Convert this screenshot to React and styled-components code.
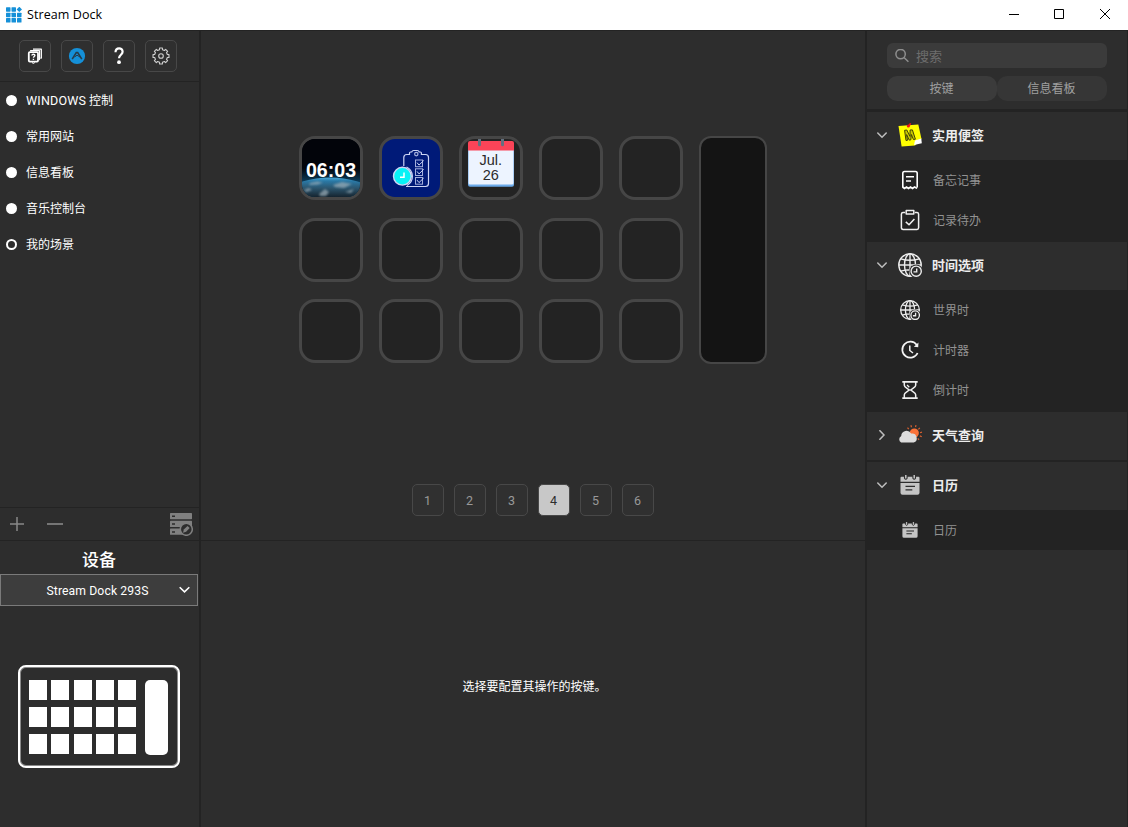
import React from "react";
import styled, { createGlobalStyle, css } from "styled-components";

const GlobalStyle = createGlobalStyle`
  * { box-sizing: border-box; }
  body {
    margin: 0;
    background: #2d2d2d;
    color: #fff;
    font: 12px/16px "Open Sans", "Noto Sans CJK SC", sans-serif;
    overflow: hidden;
  }
  svg { display: block; flex: none; }
  button { font: inherit; color: inherit; padding: 0; margin: 0; }
`;

const LINE = "#232323";
const UI_FONT = `Roboto, "Noto Sans CJK SC", sans-serif`;

const Window = styled.div`
  width: 1128px;
  height: 827px;
  display: flex;
  flex-direction: column;
`;

const TitleBar = styled.header`
  height: 30px;
  flex: none;
  display: flex;
  align-items: center;
  padding-left: 6px;
  background: #fff;
  color: #000;
`;

const AppName = styled.span`
  flex: 1;
  margin-left: 5px;
  font-size: 12.5px;
  letter-spacing: 0.08px;
`;

const CaptionButton = styled.button`
  width: ${(p) => p.$w || 46}px;
  height: 30px;
  border: 0;
  background: none;
  display: flex;
  align-items: center;
  justify-content: center;
  padding-bottom: 2px;
`;

const Body = styled.div`
  flex: 1;
  min-height: 0;
  display: flex;
  border-top: 1px solid ${LINE};
`;

const Sidebar = styled.aside`
  width: 201px;
  flex: none;
  display: flex;
  flex-direction: column;
  border-right: 2px solid ${LINE};
`;

const Toolbar = styled.div`
  height: 51px;
  flex: none;
  display: flex;
  gap: 10px;
  padding: 9px 0 0 19px;
  border-bottom: 1px solid ${LINE};
`;

const ToolButton = styled.button`
  width: 32px;
  height: 32px;
  border: 1px solid #484848;
  border-radius: 5px;
  background: #2f2f2f;
  display: flex;
  align-items: center;
  justify-content: center;
`;

const SceneList = styled.ul`
  flex: 1;
  list-style: none;
  margin: 0;
  padding: 0;
`;

const Scene = styled.li`
  height: 36px;
  display: flex;
  align-items: center;
  gap: 9px;
  padding-left: 6px;
  white-space: pre;
  font-family: ${UI_FONT};
`;

const SceneName = styled.span`
  padding-top: 1px;
  font-size: 12px;
`;

const Latin = styled.span`
  font-size: 12.5px;
  letter-spacing: 0.2px;
`;

const Dot = styled.span`
  width: 11px;
  height: 11px;
  border-radius: 50%;
  background: ${(p) => (p.$hollow ? "transparent" : "#fff")};
  border: 2px solid #fff;
`;

const SceneActions = styled.div`
  height: 34px;
  flex: none;
  display: flex;
  align-items: center;
  padding: 0 6px 0 9px;
  border-top: 1px solid ${LINE};
  border-bottom: 1px solid ${LINE};
`;

const ActionGap = styled.span`
  width: ${(p) => p.$w}px;
`;

const DevicePane = styled.section`
  height: 286px;
  flex: none;
`;

const DeviceTitle = styled.h2`
  margin: 0;
  height: 33px;
  text-align: center;
  font-size: 17px;
  line-height: 38px;
  font-weight: 500;
  padding-right: 1px;
`;

const DeviceSelect = styled.button`
  width: 198px;
  height: 32px;
  display: flex;
  align-items: center;
  border: 1px solid #7a7a7a;
  background: #3d3d3d;
  padding: 0 7px 0 0;
`;

const SelectLabel = styled.span`
  flex: 1;
  text-align: center;
  padding: 1px 0 0 15px;
  font-family: ${UI_FONT};
  font-size: 12.2px;
  letter-spacing: 0.1px;
`;

const DeviceFrame = styled.div`
  width: 162px;
  height: 103px;
  margin: 59px 0 0 18px;
  border: 2px solid #fff;
  box-shadow: inset 0 0 0 1px #8a8a8a;
  border-radius: 8px;
  display: flex;
  justify-content: space-between;
  padding: 13px 10px 12px 9px;
`;

const DeviceGrid = styled.div`
  display: grid;
  grid-template-columns: repeat(5, 18px);
  grid-template-rows: repeat(3, 20px);
  gap: 7.2px 4.3px;
`;

const DeviceKey = styled.span`
  background: #fff;
`;

const DeviceBar = styled.span`
  width: 23px;
  height: 75px;
  border-radius: 5px;
  background: #fff;
`;

const Main = styled.main`
  flex: 1;
  display: flex;
  flex-direction: column;
`;

const Canvas = styled.section`
  height: 510px;
  flex: none;
  border-bottom: 1px solid ${LINE};
  padding: 105px 0 0 98px;
`;

const Deck = styled.div`
  display: flex;
  gap: 16px;
`;

const KeyGrid = styled.div`
  display: grid;
  grid-template-columns: repeat(5, 64px);
  grid-auto-rows: 64px;
  gap: 17.5px 16px;
`;

const Key = styled.div`
  border: 3px solid #464646;
  border-radius: 16px;
  background: ${(p) => p.$bg || "#232323"};
  overflow: hidden;
`;

const TouchBar = styled.div`
  width: 68px;
  height: 228px;
  border: 2px solid #464646;
  border-radius: 12px;
  background: #141414;
`;

const Pager = styled.nav`
  display: flex;
  gap: 10px;
  margin: 120px 0 0 113px;
`;

const PageButton = styled.button`
  width: 32px;
  height: 32px;
  border: 1px solid #484848;
  border-radius: 5px;
  background: #303030;
  color: #999;
  font-family: ${UI_FONT};
  font-size: 12.5px;
  padding: 1px 1px 0 0;
  ${(p) =>
    p.$active &&
    css`
      background: #c8c8c8;
      color: #2d2d2d;
    `}
`;

const ConfigPane = styled.section`
  flex: 1;
  display: flex;
  justify-content: center;
  padding-top: 138px;
  padding-left: 3px;
`;

const Actions = styled.aside`
  width: 263px;
  flex: none;
  border-left: 2px solid ${LINE};
  border-right: 1px solid ${LINE};
`;

const ActionsHead = styled.div`
  height: 81px;
  padding: 12px 20px 0;
  border-bottom: 3px solid ${LINE};
`;

const SearchBox = styled.div`
  height: 25px;
  display: flex;
  align-items: center;
  gap: 7px;
  padding: 0 0 0 8px;
  border-radius: 6px;
  background: #3b3b3b;
  color: #6d6d6d;
  font-size: 13px;
`;

const Tabs = styled.div`
  display: flex;
  margin-top: 8px;
`;

const Tab = styled.button`
  width: 110px;
  height: 25px;
  border: 0;
  border-radius: 10px;
  background: ${(p) => (p.$active ? "#3b3b3b" : "#363636")};
  color: #a0a0a0;
  padding: 1px 1px 0 0;
`;

const Group = styled.section`
  background: ${LINE};
  padding-bottom: ${(p) => (p.$last ? 0 : 2)}px;
`;

const GroupHead = styled.div`
  height: 48px;
  display: grid;
  grid-template-columns: 10px 28px 1fr;
  column-gap: 11px;
  align-items: center;
  padding: 0 0 2px 10px;
  background: #2d2d2d;
  color: #ececec;
  font-size: 13px;
  font-weight: 700;
`;

const GroupName = styled.span`
  margin-left: -5px;
`;

const Item = styled.div`
  height: 40px;
  display: flex;
  align-items: center;
  padding-left: 31px;
  color: #929292;
`;

const IconSlot = styled.span`
  width: 24px;
  display: flex;
  justify-content: center;
`;

const ItemName = styled.span`
  margin-left: 11px;
  padding-top: 2px;
`;

const Logo = () => (
  <svg width="16" height="16" viewBox="0 0 16 16" fill="#1590d8">
    {[0.2, 5.7, 11].map((y) =>
      [0, 5.5, 11].map((x) =>
        x === 11 && y === 0.2 ? null : <rect key={`${x}-${y}`} x={x} y={y} width="4.5" height="4.5" rx=".6" />
      )
    )}
    <path d="M13.3-.3 16 2.400 13.300 5.100 10.600 2.400Z" />
  </svg>
);

const PluginIcon = () => (
  <svg width="16" height="16" viewBox="0 0 16 16" fill="none" stroke="#fff" strokeLinejoin="round">
    <path d="M3.6 3.3V2.6h8.8v8.9h-.8" strokeWidth="1.3" />
    <path d="M6 1.2h8.3v8.9h-1" strokeWidth="1.3" />
    <rect x="1.8" y="4.2" width="9.2" height="9.4" rx="1" strokeWidth="1.8" />
    <path d="m5 14.6 1.4.8 1.4-.8" strokeWidth="1" />
    <path d="M4.9 7.5c.1-1.7 3-1.7 3 0 0 1.1-1.4 1-1.4 2.2M6.4 10.7v1.2" strokeWidth="1.4" />
  </svg>
);

const StoreIcon = () => (
  <svg width="18" height="18" viewBox="0 0 18 18">
    <circle cx="9" cy="9" r="8.1" fill="#1590d8" />
    <path d="M4.2 12.2 8.3 5.6h1.400l4.100 6.600" fill="none" stroke="#263c4b" strokeWidth="1.6" />
    <path d="m9 8.200 3.600 2.200M6.600 10l2.400-1.800" fill="none" stroke="#263c4b" strokeWidth="1" />
  </svg>
);

const HelpIcon = () => (
  <svg width="12" height="18" viewBox="0 0 12 18">
    <path d="M2.5 5.2C2.7-.1 9.6.2 9.6 4.8c0 2.9-3.6 3.1-3.6 6.5" fill="none" stroke="#fff" strokeWidth="2.2" />
    <circle cx="6" cy="15.2" r="1.9" fill="#fff" />
  </svg>
);

const GEAR_OUTLINE = Array.from({ length: 8 }, (_, i) => {
  const at = (deg, r) => {
    const a = ((i * 45 + deg) * Math.PI) / 180;
    return `${(9 + r * Math.cos(a)).toFixed(2)} ${(9 + r * Math.sin(a)).toFixed(2)}`;
  };
  return `${at(-13, 6.5)} ${at(-10, 8.1)} ${at(10, 8.1)} ${at(13, 6.5)}`;
}).join(" ");

const GearIcon = () => (
  <svg width="18" height="18" viewBox="0 0 18 18" fill="none" stroke="#cfcfcf" strokeWidth="1.1" strokeLinejoin="round">
    <polygon points={GEAR_OUTLINE} />
    <circle cx="9" cy="9" r="2.3" />
  </svg>
);

const ManageIcon = () => (
  <svg width="24" height="24" viewBox="0 0 24 24">
    <rect x="1" y="1" width="22" height="6.2" rx=".6" fill="#808080" />
    <rect x="1" y="8.8" width="22" height="6.2" rx=".6" fill="#808080" />
    <rect x="1" y="16.6" width="15" height="6.2" rx=".6" fill="#808080" />
    <path d="M3 4.3h3M3 12.1h3M3 19.9h3" stroke="#2d2d2d" strokeWidth="1.5" />
    <circle cx="17.3" cy="17.3" r="6" fill="#2d2d2d" stroke="#808080" strokeWidth="1.5" />
    <path d="m14 20.7.8-3.2 3.7-3.6 2.2 2.2-3.6 3.7Z" fill="#808080" />
  </svg>
);

const Chevron = ({ right }) => (
  <svg width="10" height="10" viewBox="0 0 10 10" fill="none" stroke="#bdbdbd" strokeWidth="1.5">
    <path d={right ? "M2.4.2 7 5 2.4 9.8" : "M.3 2.6 5 7.2 9.7 2.6"} />
  </svg>
);

const SearchIcon = () => (
  <svg width="14" height="14" viewBox="0 0 14 14" fill="none" stroke="#8e8e8e" strokeWidth="1.5">
    <circle cx="5.6" cy="5.1" r="4.7" />
    <path d="m9 8.500 4.400 4.200" />
  </svg>
);

const StickyIcon = () => (
  <svg width="24" height="24" viewBox="0 0 24 24">
    <path d="M.5 3 20.3 1.6 23.5 16 17 22.5 3.6 23.6Z" fill="#ffff00" />
    <path d="m17 17.6 6.3-2 .5 4.6-7.8 1.7Z" fill="#fff" />
    <path d="m10.6 3.3 2-3" stroke="#f01818" strokeWidth="1.6" />
    <circle cx="10.3" cy="2.9" r="1.5" fill="#f01818" />
    <path d="M8 17.5 6.6 7.3 8.8 7l3.2 6.4.1-6.4 2.3-.1 3 9.3-2 .3-2-5-.6 5.4-1.6.2-2.6-5.5.9 5.7Z" fill="#c8c800" stroke="#3f4106" />
  </svg>
);

const MemoIcon = () => (
  <svg width="18" height="20" viewBox="0 0 18 20" fill="none" stroke="#fff" strokeWidth="1.6">
    <path d="M1.8 17.5V3.2q0-1.7 1.7-1.7h11q1.7 0 1.7 1.7v14.3M5 6.8h8M5 11h5" />
    <path d="m1.5 17 2 1.4 2-1.4 2 1.4 2-1.4 2 1.4 2-1.4 2.6 1.4" />
  </svg>
);

const TodoIcon = () => (
  <svg width="20" height="22" viewBox="0 0 20 22" fill="none" stroke="#f0f0f0" strokeWidth="1.5" strokeLinejoin="round">
    <path d="M5.2 3.5H3A1.7 1.7 0 0 0 1.4 5v14A1.7 1.7 0 0 0 3 20.4h14a1.7 1.7 0 0 0 1.6-1.6V5A1.7 1.7 0 0 0 17 3.5h-2.2" />
    <path d="M6.2 1.5h7.6V5H6.2ZM5.8 12.9l3.2 2.9 5.4-5.9" />
  </svg>
);

const GlobeClockIcon = ({ size, cover }) => (
  <svg width={size} height={size} viewBox="0 0 24 24" fill="none" stroke="#ececec" strokeWidth={size > 22 ? 1.4 : 1.6}>
    <circle cx="12" cy="12" r="11.2" />
    <ellipse cx="12" cy="12" rx="5.5" ry="11.2" />
    <path d="M12 .7v22.6M.7 12h22.6M2.8 5.8q9.2 3 18.4 0M2.8 18.2q9.2-3 18.4 0" />
    <circle cx="18.2" cy="18.2" r="6.8" fill={cover} stroke="none" />
    <circle cx="18.2" cy="18.2" r="5.1" />
    <path d="M18.7 15.400v3.500h-3.200" />
  </svg>
);

const TimerIcon = () => (
  <svg width="20" height="20" viewBox="0 0 20 20" fill="none" stroke="#f4f4f4" strokeWidth="1.7">
    <path d="M16.8 5A8 8 0 1 0 17.6 13" />
    <path d="M9.8 5.5v5l3.2 2.5" strokeWidth="1.5" />
    <path d="m18.5 2.6-.3 4.6-4.3-.5Z" fill="#f4f4f4" stroke="none" />
  </svg>
);

const HourglassIcon = () => (
  <svg width="18" height="20" viewBox="0 0 18 20" fill="none" stroke="#f0f0f0" strokeWidth="1.5">
    <path d="M1.300 1.900h15.400M1.300 18.100h15.400" strokeWidth="1.7" />
    <path d="M3.300 2v3.300c0 2.400 4.300 3 4.300 4.700s-4.300 2.300-4.300 4.700V18M14.700 2v3.300c0 2.400-4.300 3-4.300 4.700s4.300 2.300 4.300 4.700V18" />
    <path d="m6 5 2.300 2.200M7.600 10h2.800" strokeWidth="1.3" />
  </svg>
);

const WeatherIcon = () => (
  <svg width="26" height="20" viewBox="0 0 26 20">
    <circle cx="17.3" cy="8" r="4.6" fill="#fa7238" />
    <path
      d="m11.7 4.1-1.2-1.5M14.5 2.2 13.9.3M18.5 2l.5-1.8M21.4 4.3l1.4-1.5M23 7.7l2-.6M22.8 10.9l2 .8M20.8 13.3l1.2 1.6"
      stroke="#d8602f"
      strokeWidth="1.2"
    />
    <path d="M4.2 17.6A3.8 3.8 0 0 1 4.2 10.9 5.3 5.3 0 0 1 14.1 8.6 4.7 4.7 0 0 1 16.7 17.6Z" fill="#dcdcdc" />
  </svg>
);

const CalendarIcon = ({ size, cover }) => (
  <svg width={size} height={size} viewBox="0 0 20 20">
    <path d="M1.5 1.8h17q1 0 1 1V6.7H.5V2.8q0-1 1-1ZM.5 7.9h19v9.8q0 2-2 2h-15q-2 0-2-2Z" fill="#c4c4c4" />
    <path d="M4.5-.5v3.8q1.3 2 2.6 0v-3.8M12.9-.5v3.8q1.3 2 2.6 0v-3.8" fill="#c4c4c4" stroke={cover} strokeWidth="1.1" />
    <path d="M5.5 11.3h9.5M5.5 14.8h6.8" stroke={cover} strokeWidth="1.3" />
  </svg>
);

const EarthClock = () => (
  <svg width="58" height="58" viewBox="0 0 58 58">
    <defs>
      <linearGradient id="earth" gradientUnits="userSpaceOnUse" x1="0" y1="38" x2="0" y2="58">
        <stop offset="0" stopColor="#4fb2e2" />
        <stop offset=".2" stopColor="#2a79a6" />
        <stop offset=".55" stopColor="#2c566f" />
        <stop offset="1" stopColor="#15242f" />
      </linearGradient>
      <linearGradient id="sky" x1="0" y1="0" x2="0" y2="1">
        <stop offset=".5" stopColor="#02040a" />
        <stop offset=".75" stopColor="#0c405f" />
      </linearGradient>
      <filter id="haze"><feGaussianBlur stdDeviation=".8" /></filter>
    </defs>
    <rect width="58" height="58" fill="url(#sky)" />
    <ellipse cx="28" cy="88.5" rx="70" ry="50" fill="url(#earth)" />
    <g fill="#9fb0ba" opacity=".7" filter="url(#haze)">
      <path d="m8 44 7-1.500 6 1-5 2-9 .5ZM17 55l6-5 4 3-3 4-6 0ZM31 46l9-3 10 2-8 4-9-1ZM2 51l5-2 3 2-6 2ZM43 53l9-3-3 4Z" />
    </g>
    <text x="29" y="37.7" textAnchor="middle" fill="#fff" fontFamily="Liberation Sans, sans-serif" fontWeight="700" fontSize="19.6">
      06:03
    </text>
  </svg>
);

const ChecklistArt = () => (
  <svg width="58" height="58" viewBox="0 0 58 58" fill="none" stroke="#ccd5f5" strokeWidth="1.2">
    <path d="M21.800 27V18.500q0-3 3-3h2.700v-1.500q0-1 1-1h1.200q.5-1.500 2-1.500h3.500q1.500 0 2 1.500h1.200q1 0 1 1v1.500H43.500q3 0 3 3v26q0 3-3 3H24" />
    <circle cx="34.300" cy="15.100" r="1.700" opacity=".8" />
    {[21, 29.8, 38.5].map((y) => (
      <g key={y} strokeWidth="1">
        <rect x="33.5" y={y} width="7" height="6.7" opacity=".8" />
        <path d={`m35 ${y + 2.6} 2 2.500 4.700-4.600`} />
      </g>
    ))}
    <path d="M24.500 28A10.400 10.400 0 0 1 25 46.500" />
    <circle cx="20.400" cy="37.200" r="8.900" fill="#08f2f6" strokeWidth="1.4" />
    <path d="M22 33.600v4.600h-4" stroke="#fff" strokeWidth="1.5" />
  </svg>
);

const CalendarArt = () => (
  <svg width="58" height="58" viewBox="0 0 58 58">
    <rect x="6" y="8" width="46" height="39.700" rx="2" fill="#6cabea" />
    <rect x="6.500" y="8" width="45" height="37.500" rx="1.500" fill="#edf4ff" />
    <path d="M6 11.500V4q0-2 2-2h42q2 0 2 2v7.500Z" fill="#fb4458" />
    <path d="M17.500 0v5.800M40.500 0v5.800" stroke="#637180" strokeWidth="3" strokeLinecap="round" />
    <g fill="#2b2b2b" fontFamily="Liberation Sans, sans-serif" fontSize="14.5" textAnchor="middle">
      <text x="28.8" y="25.7">Jul.</text>
      <text x="28.8" y="40.5">26</text>
    </g>
  </svg>
);

const KEY_ART = [
  { bg: "#02040a", art: <EarthClock /> },
  { bg: "#001a78", art: <ChecklistArt /> },
  { bg: "#232323", art: <CalendarArt /> },
];

const SCENES = [
  { latin: "WINDOWS", name: " 控制" },
  { name: "常用网站" },
  { name: "信息看板" },
  { name: "音乐控制台" },
  { name: "我的场景" },
];

const GROUPS = [
  {
    name: "实用便签",
    icon: <StickyIcon />,
    open: true,
    items: [
      ["备忘记事", <MemoIcon />],
      ["记录待办", <TodoIcon />],
    ],
  },
  {
    name: "时间选项",
    icon: <GlobeClockIcon size={24} cover="#2d2d2d" />,
    open: true,
    items: [
      ["世界时", <GlobeClockIcon size={20} cover="#232323" />],
      ["计时器", <TimerIcon />],
      ["倒计时", <HourglassIcon />],
    ],
  },
  { name: "天气查询", icon: <WeatherIcon />, open: false, items: [] },
  {
    name: "日历",
    icon: <CalendarIcon size={20} cover="#2d2d2d" />,
    open: true,
    items: [["日历", <CalendarIcon size={16} cover="#232323" />]],
  },
];

export default function App() {
  return (
    <>
      <GlobalStyle />
      <Window>
        <TitleBar>
          <Logo />
          <AppName>Stream Dock</AppName>
          <CaptionButton $w={45}>
            <svg width="10" height="10" viewBox="0 0 10 10" stroke="#000"><path d="M0 5.5h10" /></svg>
          </CaptionButton>
          <CaptionButton>
            <svg width="10" height="10" viewBox="0 0 10 10" stroke="#000" fill="none"><path d="M.5.5h9v9h-9Z" /></svg>
          </CaptionButton>
          <CaptionButton>
            <svg width="10" height="10" viewBox="0 0 10 10" stroke="#000"><path d="m0 0 10 10M10 0 0 10" /></svg>
          </CaptionButton>
        </TitleBar>
        <Body>
          <Sidebar>
            <Toolbar>
              <ToolButton><PluginIcon /></ToolButton>
              <ToolButton><StoreIcon /></ToolButton>
              <ToolButton><HelpIcon /></ToolButton>
              <ToolButton><GearIcon /></ToolButton>
            </Toolbar>
            <SceneList>
              {SCENES.map(({ latin, name }, i) => (
                <Scene key={name}>
                  <Dot $hollow={i === SCENES.length - 1} />
                  <SceneName>
                    {latin && <Latin>{latin}</Latin>}
                    {name}
                  </SceneName>
                </Scene>
              ))}
            </SceneList>
            <SceneActions>
              <svg width="16" height="16" viewBox="0 0 16 16" stroke="#888" strokeWidth="1.5"><path d="M8 1v14M1 8h14" /></svg>
              <ActionGap $w={22} />
              <svg width="16" height="16" viewBox="0 0 16 16" stroke="#888" strokeWidth="1.6"><path d="M0 8h16" /></svg>
              <ActionGap $w={106} />
              <ManageIcon />
            </SceneActions>
            <DevicePane>
              <DeviceTitle>设备</DeviceTitle>
              <DeviceSelect>
                <SelectLabel>Stream Dock 293S</SelectLabel>
                <svg width="11" height="8" viewBox="0 0 11 8" fill="none" stroke="#fff" strokeWidth="1.6"><path d="m.7 1.2 4.8 4.7 4.8-4.7" /></svg>
              </DeviceSelect>
              <DeviceFrame>
                <DeviceGrid>
                  {Array.from({ length: 15 }, (_, i) => <DeviceKey key={i} />)}
                </DeviceGrid>
                <DeviceBar />
              </DeviceFrame>
            </DevicePane>
          </Sidebar>
          <Main>
            <Canvas>
              <Deck>
                <KeyGrid>
                  {Array.from({ length: 15 }, (_, i) => (
                    <Key key={i} $bg={KEY_ART[i]?.bg}>{KEY_ART[i]?.art}</Key>
                  ))}
                </KeyGrid>
                <TouchBar />
              </Deck>
              <Pager>
                {[1, 2, 3, 4, 5, 6].map((n) => (
                  <PageButton key={n} $active={n === 4}>{n}</PageButton>
                ))}
              </Pager>
            </Canvas>
            <ConfigPane>选择要配置其操作的按键。</ConfigPane>
          </Main>
          <Actions>
            <ActionsHead>
              <SearchBox><SearchIcon />搜索</SearchBox>
              <Tabs>
                <Tab $active>按键</Tab>
                <Tab>信息看板</Tab>
              </Tabs>
            </ActionsHead>
            {GROUPS.map((g, i) => (
              <Group key={g.name} $last={i === GROUPS.length - 1}>
                <GroupHead>
                  <Chevron right={!g.open} />
                  <IconSlot>{g.icon}</IconSlot>
                  <GroupName>{g.name}</GroupName>
                </GroupHead>
                {g.items.map(([name, icon]) => (
                  <Item key={name}>
                    <IconSlot>{icon}</IconSlot>
                    <ItemName>{name}</ItemName>
                  </Item>
                ))}
              </Group>
            ))}
          </Actions>
        </Body>
      </Window>
    </>
  );
}
